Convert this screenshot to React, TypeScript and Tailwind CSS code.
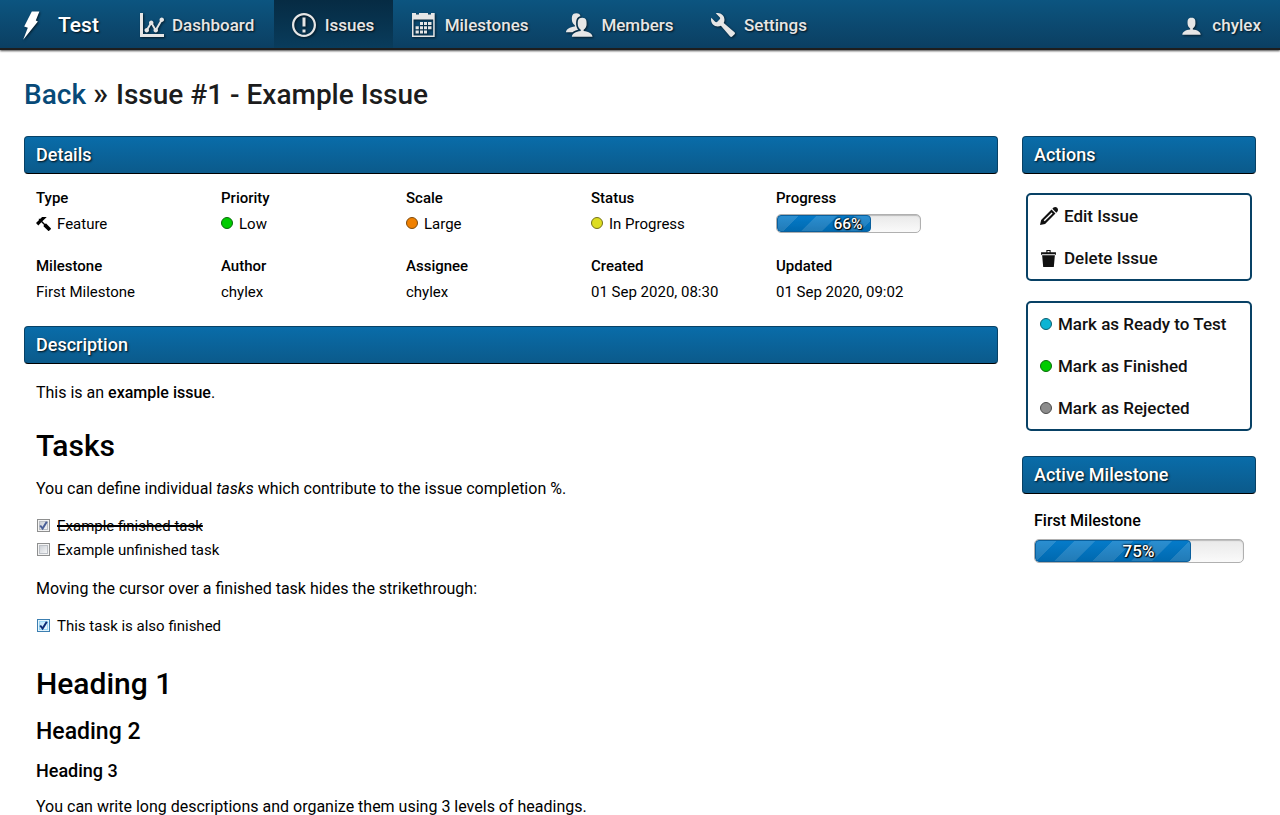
import React, { type ReactNode } from "react";
import {
  ImBin2,
  ImHammer,
  ImNotification,
  ImPencil,
  ImStatsDots,
  ImUser,
  ImUsers,
  ImWrench,
} from "react-icons/im";

const iconShadow = "drop-shadow-[1px_1px_1px_rgba(0,0,0,0.6)]";

type Icon = (props: { className?: string }) => ReactNode;

function CalendarIcon({ className }: { className?: string }) {
  return (
    <svg viewBox="0 0 24 24" fill="currentColor" className={className}>
      <path
        fillRule="evenodd"
        d="M0 0H4V1.5H7V0H16V1.5H19V0H22.7V24H0ZM1.5 6.5V22.5H21.2V6.5Z"
      />
      <path d="M8 9h3v3H8zM12 9h3v3h-3zM16 9h3.5v3H16zM3.6 13.3h3.2v3H3.6zM8 13.3h3v3H8zM12 13.3h3v3h-3zM16 13.3h3.5v3H16zM3.6 17.6h3.2v3H3.6zM8 17.6h3v3H8zM12 17.6h3v3h-3z" />
    </svg>
  );
}

function NavItem({ icon: Icon, label, active, wide }: { icon: Icon; label: string; active?: boolean; wide?: boolean }) {
  return (
    <a
      className={`mr-[0.4px] flex h-12 items-center pt-[3px] pr-[19px] pl-[18.5px] ${
        active ? "bg-linear-to-b from-[#062b43] to-[#093c5c]" : ""
      }`}
    >
      <Icon className={`${wide ? "w-[26.5px]" : "w-6"} mr-[8.5px] mb-px h-6 shrink-0 ${iconShadow}`} />
      <span>{label}</span>
    </a>
  );
}

function Bar({ children }: { children: ReactNode }) {
  return (
    <h3 className="h-[38px] rounded-[4px] border border-[#084165] border-b-black bg-linear-to-b from-[#096ca9] to-[#0b5a8b] px-[11px] text-[18px] leading-9 font-medium text-white text-shadow-[1px_1px_2px_rgba(0,0,0,0.9)]">
      {children}
    </h3>
  );
}

function Dot({ className }: { className: string }) {
  return <span className={`mr-1.5 size-3 shrink-0 rounded-full border ${className}`} />;
}

function Field({ title, children }: { title: string; children: ReactNode }) {
  return (
    <div className="w-[185px] text-[15px]">
      <div className="h-[26px] leading-[26px] font-medium">{title}</div>
      <div className="flex h-[26px] items-center leading-[26px]">{children}</div>
    </div>
  );
}

function Progress({ value, large }: { value: number; large?: boolean }) {
  return (
    <div
      className={`relative overflow-hidden rounded-[5px] border border-[#b0b0b0] bg-linear-to-b from-[#e9e9e9] to-[#fafafa] shadow-[inset_0_1px_1px_#bbb] ${
        large ? "h-6 w-[210px]" : "mb-px h-[19px] w-[145px]"
      }`}
    >
      <div
        className="h-full rounded-[4px] border border-[#0a5f9c] bg-[#0078c8] bg-[linear-gradient(to_bottom,rgba(255,255,255,0.02),rgba(0,0,0,0.12)),repeating-linear-gradient(135deg,rgba(255,255,255,0.15)_0px,rgba(255,255,255,0.15)_14.4px,transparent_14.8px,transparent_26.8px,rgba(255,255,255,0.15)_27.2px)]"
        style={{ width: `${value}%` }}
      />
      <span
        className={`absolute inset-y-0 right-px left-0 text-center font-medium text-white text-shadow-[0_0_2px_#000,0_0_2px_#000,1px_1px_1px_#000] ${
          large ? "text-[17px] leading-[23px]" : "text-[15.5px] leading-[18px]"
        }`}
      >
        {value}%
      </span>
    </div>
  );
}

function Checkbox({ checked, enabled }: { checked?: boolean; enabled?: boolean }) {
  return (
    <span
      className={`mr-[7px] mb-px ml-px flex size-[13px] shrink-0 border p-px ${
        enabled ? "border-[#3c7fb1] bg-[#e5f5fd]" : "border-[#8e8f8f] bg-[#f4f4f4]"
      }`}
    >
      <span
        className={`flex size-[9px] border bg-linear-to-br ${
          enabled ? "border-[#9cd6f5] from-[#b9e3fa] to-[#eef9ff]" : "border-[#bcc0c6] from-[#cdd1d7] to-[#f5f6f7]"
        }`}
      >
        {checked && (
          <svg viewBox="0 0 9 9" className="-m-px size-[9px] shrink-0 overflow-visible">
            <path d="M1.2 4.5 3.6 7.6 7.8 .8" fill="none" strokeWidth="2" stroke={enabled ? "#0c2a75" : "#4a5f97"} />
          </svg>
        )}
      </span>
    </span>
  );
}

function Task({ children, ...box }: { children: ReactNode; checked?: boolean; enabled?: boolean }) {
  return (
    <div className="flex h-6 items-center text-[15px] leading-6">
      <Checkbox {...box} />
      {children}
    </div>
  );
}

function Action({ children }: { children: ReactNode }) {
  return <a className="flex h-[42px] items-center pl-3 leading-[26px]">{children}</a>;
}

const panel = "mx-1 rounded-[5px] border-2 border-[#084165] text-[17px] font-medium text-[#111]";

export default function App() {
  return (
    <div className="h-[815px] w-[1280px] overflow-hidden bg-white font-[Roboto,sans-serif] text-[16px] text-black">
      <header className="flex h-[50px] border-b-2 border-[#1e1e1e] bg-linear-to-b from-[#0c5580] to-[#0b3f62] text-[17px] font-medium text-[#e6e6e6] shadow-[0_1px_2px_rgba(0,0,0,0.7)] text-shadow-[1px_1px_2px_rgba(0,0,0,0.8)]">
        <a className="flex h-12 w-[121px] items-center pt-[3px] pl-[22px] text-[21px] text-white">
          <svg viewBox="0 0 18 30" className={`mr-[18px] h-[30px] w-[18px] ${iconShadow}`}>
            <path d="M9.8 .6H17.4L13.8 9.4 15.9 10.6 1.2 28.8 5.8 16.8 2.2 15.6Z" fill="#fff" />
          </svg>
          <span>Test</span>
        </a>
        <nav className="flex">
          <NavItem icon={ImStatsDots} label="Dashboard" />
          <NavItem icon={ImNotification} label="Issues" active />
          <NavItem icon={CalendarIcon} label="Milestones" />
          <NavItem icon={ImUsers} label="Members" wide />
          <NavItem icon={ImWrench} label="Settings" />
        </nav>
        <a className="mr-[19px] ml-auto flex h-12 items-center pt-[3px]">
          <ImUser className={`mr-[10px] mb-px size-[21px] ${iconShadow}`} />
          <span>chylex</span>
        </a>
      </header>

      <h2 className="mt-[25px] ml-6 h-10 text-[28px] leading-10 font-medium text-[#1c1c1c]">
        <a className="text-[#084a78]">Back</a> <span className="mr-px text-[31px] leading-none">»</span> Issue #1 - Example Issue
      </h2>

      <div className="mt-[21px] flex gap-6 px-6">
        <main className="w-[974px]">
          <Bar>Details</Bar>
          <section className="flex h-[152px] flex-wrap content-start gap-y-4 pt-[11px] pl-3">
            <Field title="Type">
              <ImHammer className="mr-[6px] mb-0.5 size-[15px]" />
              Feature
            </Field>
            <Field title="Priority">
              <Dot className="mb-0.5 border-[#0a6b0a] bg-[#00cc00]" />
              Low
            </Field>
            <Field title="Scale">
              <Dot className="mb-0.5 border-[#7d4a0c] bg-[#f08000]" />
              Large
            </Field>
            <Field title="Status">
              <Dot className="mb-0.5 border-[#75721a] bg-[#dddd20]" />
              In Progress
            </Field>
            <Field title="Progress">
              <Progress value={66} />
            </Field>
            <Field title="Milestone">First Milestone</Field>
            <Field title="Author">chylex</Field>
            <Field title="Assignee">chylex</Field>
            <Field title="Created">01 Sep 2020, 08:30</Field>
            <Field title="Updated">01 Sep 2020, 09:02</Field>
          </section>

          <Bar>Description</Bar>
          <article className="px-3 pt-[17px]">
            <p className="leading-6">
              This is an <b className="font-medium">example issue</b>.
            </p>
            <h1 className="mt-[21px] text-[30px] leading-10 font-medium">Tasks</h1>
            <p className="mt-[11px] leading-6">
              You can define individual <em>tasks</em> which contribute to the issue completion %.
            </p>
            <div className="mt-[13px]">
              <Task checked>
                <span className="line-through decoration-2">Example finished task</span>
              </Task>
              <Task>Example unfinished task</Task>
            </div>
            <p className="mt-[15px] leading-6">Moving the cursor over a finished task hides the strikethrough:</p>
            <div className="mt-[13px]">
              <Task checked enabled>
                This task is also finished
              </Task>
            </div>
            <h1 className="mt-[26px] text-[30px] leading-10 font-medium">Heading 1</h1>
            <h2 className="mt-3 text-[23px] leading-8 font-medium">Heading 2</h2>
            <h3 className="mt-[11px] text-[18px] leading-6 font-medium">Heading 3</h3>
            <p className="mt-3 leading-6">
              You can write long descriptions and organize them using 3 levels of headings.
            </p>
          </article>
        </main>

        <aside className="w-[234px]">
          <Bar>Actions</Bar>
          <div className={`mt-[19px] ${panel}`}>
            <Action>
              <ImPencil className="mr-1.5 size-[18px]" />
              <span>Edit Issue</span>
            </Action>
            <Action>
              <ImBin2 className="mr-[7px] size-[17px]" />
              <span>Delete Issue</span>
            </Action>
          </div>
          <div className={`mt-5 mb-[25px] ${panel}`}>
            <Action>
              <Dot className="border-[#0c5f70] bg-[#0bb4d4]" />
              <span>Mark as Ready to Test</span>
            </Action>
            <Action>
              <Dot className="border-[#0a6b0a] bg-[#00cc00]" />
              <span>Mark as Finished</span>
            </Action>
            <Action>
              <Dot className="border-[#4a4a4a] bg-[#8c8c8c]" />
              <span>Mark as Rejected</span>
            </Action>
          </div>
          <Bar>Active Milestone</Bar>
          <div className="px-3 pt-[15px]">
            <div className="mb-1.5 text-[16px] leading-6 font-medium">First Milestone</div>
            <Progress value={75} large />
          </div>
        </aside>
      </div>
    </div>
  );
}
